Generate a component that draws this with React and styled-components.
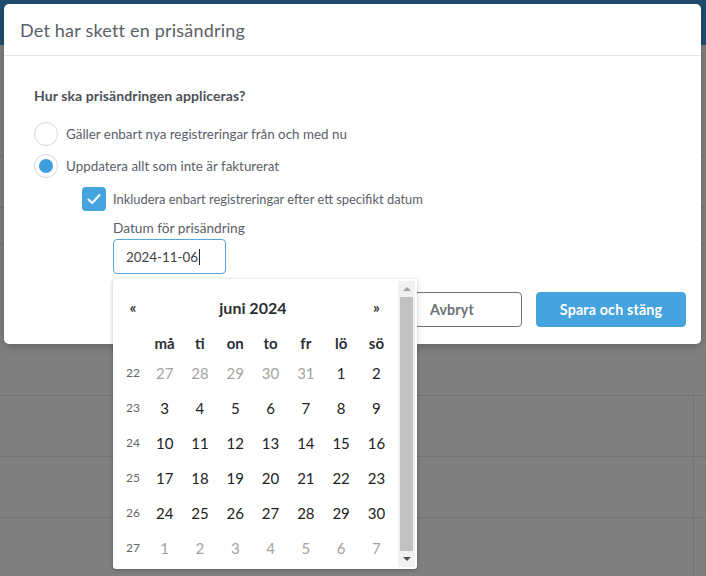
import React from "react";
import styled, { createGlobalStyle } from "styled-components";

const GlobalStyle = createGlobalStyle`
  html, body { margin: 0; padding: 0; }
  body {
    width: 706px;
    height: 576px;
    overflow: hidden;
    font-family: Lato, "Open Sans", "Liberation Sans", sans-serif;
    background: #7f7f7f;
  }
  * { box-sizing: border-box; }
`;

const Page = styled.div`
  position: relative;
  width: 706px;
  height: 576px;
  background: #7f7f7f;
  overflow: hidden;
`;

const NavBar = styled.div`
  height: 45px;
  background: #1f4d6d;
`;

const Section = styled.div`
  height: ${({ h }) => h}px;
  border-bottom: 1px solid #727272;
  display: flex;
  justify-content: flex-end;
  align-items: center;
  padding-right: 18px;
`;

const Row = styled.div`
  height: 61px;
  border-bottom: 1px solid #727272;
  display: grid;
  grid-template-columns: 1fr 13px;
  & > div + div { border-left: 1px solid #727272; }
`;

const SortIcon = () => (
  <svg width="10" height="14" viewBox="0 0 10 14">
    <path d="M1 6 L5 1.5 L9 6 Z" fill="none" stroke="#666" strokeWidth="1.3" />
    <path d="M1 8 L5 12.5 L9 8 Z" fill="none" stroke="#666" strokeWidth="1.3" />
  </svg>
);

const Modal = styled.div`
  position: absolute;
  left: 4px;
  top: 4px;
  width: 697px;
  height: 340px;
  background: #fff;
  border-radius: 5px;
  box-shadow: 0 3px 10px rgba(0, 0, 0, 0.2);
  display: flex;
  flex-direction: column;
`;

const Header = styled.div`
  height: 52px;
  border-bottom: 1px solid #e5e5e5;
  display: flex;
  align-items: center;
  padding: 0 16px;
  font-size: 18px;
  letter-spacing: 0.2px;
  color: #5b6068;
`;

const Body = styled.div`
  padding: 31px 30px 0;
  display: flex;
  flex-direction: column;
`;

const Question = styled.div`
  font-size: 14px;
  font-weight: 700;
  letter-spacing: 0.1px;
  color: #4b5058;
  line-height: 18px;
  margin-bottom: 17px;
`;

const Option = styled.label`
  display: flex;
  align-items: center;
  gap: 8px;
  font-size: 13.4px;
  color: #5b6068;
  height: 24px;
  margin-bottom: ${({ mb }) => mb || 0}px;
  margin-left: ${({ indent }) => indent || 0}px;
`;

const Radio = styled.span`
  width: 24px;
  height: 24px;
  border-radius: 50%;
  border: 1px solid #d2d7de;
  display: flex;
  align-items: center;
  justify-content: center;
  &::after {
    content: "";
    width: 14px;
    height: 14px;
    border-radius: 50%;
    background: ${({ checked }) => (checked ? "#3e9fde" : "transparent")};
  }
`;

const Check = styled.span`
  width: 24px;
  height: 24px;
  border-radius: 4px;
  background: #45a3dd;
  display: flex;
  align-items: center;
  justify-content: center;
`;

const SmallText = styled.span`
  font-size: 12.9px;
  color: #5b6068;
  margin-left: -1px;
`;

const DateField = styled.div`
  margin-left: 79px;
  margin-top: 9px;
  display: flex;
  flex-direction: column;
  gap: 3px;
`;

const FieldLabel = styled.div`
  font-size: 13.7px;
  line-height: 16px;
  color: #5b6068;
`;

const Input = styled.div`
  width: 113px;
  height: 35px;
  border: 1px solid #55a6df;
  border-radius: 4px;
  padding: 0 12px;
  display: flex;
  align-items: center;
  font-size: 13.4px;
  color: #3d4249;
  &::after {
    content: "";
    width: 1px;
    height: 16px;
    background: #222;
    margin-left: 1px;
  }
`;

const Footer = styled.div`
  margin-top: auto;
  padding: 0 15px 17px;
  display: flex;
  justify-content: flex-end;
  gap: 14px;
`;

const Button = styled.button`
  height: 35px;
  width: ${({ w }) => w}px;
  border-radius: 4px;
  font-family: inherit;
  font-size: 14.2px;
  font-weight: 700;
  letter-spacing: 0.2px;
  border: 1px solid ${({ primary }) => (primary ? "#45a3dd" : "#6c7178")};
  background: ${({ primary }) => (primary ? "#45a3dd" : "#fff")};
  color: ${({ primary }) => (primary ? "#fff" : "#6c7178")};
`;

const Picker = styled.div`
  position: absolute;
  left: 113px;
  top: 279px;
  width: 304px;
  height: 290px;
  background: #fff;
  border-radius: 3px;
  box-shadow: 0 1px 4px rgba(0, 0, 0, 0.25);
  display: flex;
  overflow: hidden;
`;

const Calendar = styled.div`
  flex: 1;
  padding: 11px 0 0 6px;
`;

const Grid = styled.div`
  display: grid;
  grid-template-columns: 28px repeat(7, 35.3px);
  align-items: center;
  justify-items: center;
  height: ${({ h }) => h}px;
  margin-top: ${({ mt }) => mt || 0}px;
`;

const NavArrow = styled.span`
  font-size: 15px;
  font-weight: 700;
  color: #333;
`;

const Title = styled.span`
  grid-column: 2 / 8;
  font-size: 16px;
  font-weight: 700;
  color: #2b2f36;
`;

const DayName = styled.span`
  font-size: 15px;
  font-weight: 700;
  color: #2b2f36;
`;

const Week = styled.span`
  font-size: 12px;
  color: #666;
`;

const Day = styled.span`
  font-size: 15px;
  color: ${({ muted }) => (muted ? "#a3a3a3" : "#222")};
`;

const Scroll = styled.div`
  width: 17px;
  margin: 2px 2px 2px 0;
  background: #f1f1f1;
  display: flex;
  flex-direction: column;
  align-items: center;
`;

const Arrow = styled.span`
  width: 0;
  height: 0;
  border-left: 4px solid transparent;
  border-right: 4px solid transparent;
  ${({ down }) =>
    down ? "border-top: 4px solid #505050;" : "border-bottom: 4px solid #a3a3a3;"}
  margin: 6px 0;
`;

const Thumb = styled.div`
  width: 13px;
  flex: 1;
  background: #c1c1c1;
`;

const weeks = [
  [22, [27, 28, 29, 30, 31, 1, 2], [1, 1, 1, 1, 1, 0, 0]],
  [23, [3, 4, 5, 6, 7, 8, 9]],
  [24, [10, 11, 12, 13, 14, 15, 16]],
  [25, [17, 18, 19, 20, 21, 22, 23]],
  [26, [24, 25, 26, 27, 28, 29, 30]],
  [27, [1, 2, 3, 4, 5, 6, 7], [1, 1, 1, 1, 1, 1, 1]],
];

const dayNames = ["må", "ti", "on", "to", "fr", "lö", "sö"];

export default function App() {
  return (
    <Page>
      <GlobalStyle />
      <NavBar />
      <Section h={112} />
      <Section h={51} />
      <Section h={36} />
      <Section h={152}>
        <SortIcon />
      </Section>
      <Row><div /><div /></Row>
      <Row><div /><div /></Row>
      <Row><div /><div /></Row>

      <Modal>
        <Header>Det har skett en prisändring</Header>
        <Body>
          <Question>Hur ska prisändringen appliceras?</Question>
          <Option mb={8}>
            <Radio />
            Gäller enbart nya registreringar från och med nu
          </Option>
          <Option mb={9}>
            <Radio checked />
            Uppdatera allt som inte är fakturerat
          </Option>
          <Option indent={48}>
            <Check>
              <svg width="16" height="16" viewBox="0 0 16 16">
                <path d="M2.5 8.5 L6.2 12 L13.5 4" fill="none" stroke="#fff" strokeWidth="2" strokeLinecap="round" strokeLinejoin="round" />
              </svg>
            </Check>
            <SmallText>Inkludera enbart registreringar efter ett specifikt datum</SmallText>
          </Option>
          <DateField>
            <FieldLabel>Datum för prisändring</FieldLabel>
            <Input>2024-11-06</Input>
          </DateField>
        </Body>
        <Footer>
          <Button w={140}>Avbryt</Button>
          <Button w={150} primary>Spara och stäng</Button>
        </Footer>
      </Modal>

      <Picker>
        <Calendar>
          <Grid h={34}>
            <NavArrow>«</NavArrow>
            <Title>juni 2024</Title>
            <NavArrow>»</NavArrow>
          </Grid>
          <Grid h={24} mt={7}>
            <span />
            {dayNames.map((d) => (
              <DayName key={d}>{d}</DayName>
            ))}
          </Grid>
          {weeks.map(([w, days, muted]) => (
            <Grid h={35} key={w}>
              <Week>{w}</Week>
              {days.map((d, i) => (
                <Day key={i} muted={muted && muted[i]}>{d}</Day>
              ))}
            </Grid>
          ))}
        </Calendar>
        <Scroll>
          <Arrow />
          <Thumb />
          <Arrow down />
        </Scroll>
      </Picker>
    </Page>
  );
}
